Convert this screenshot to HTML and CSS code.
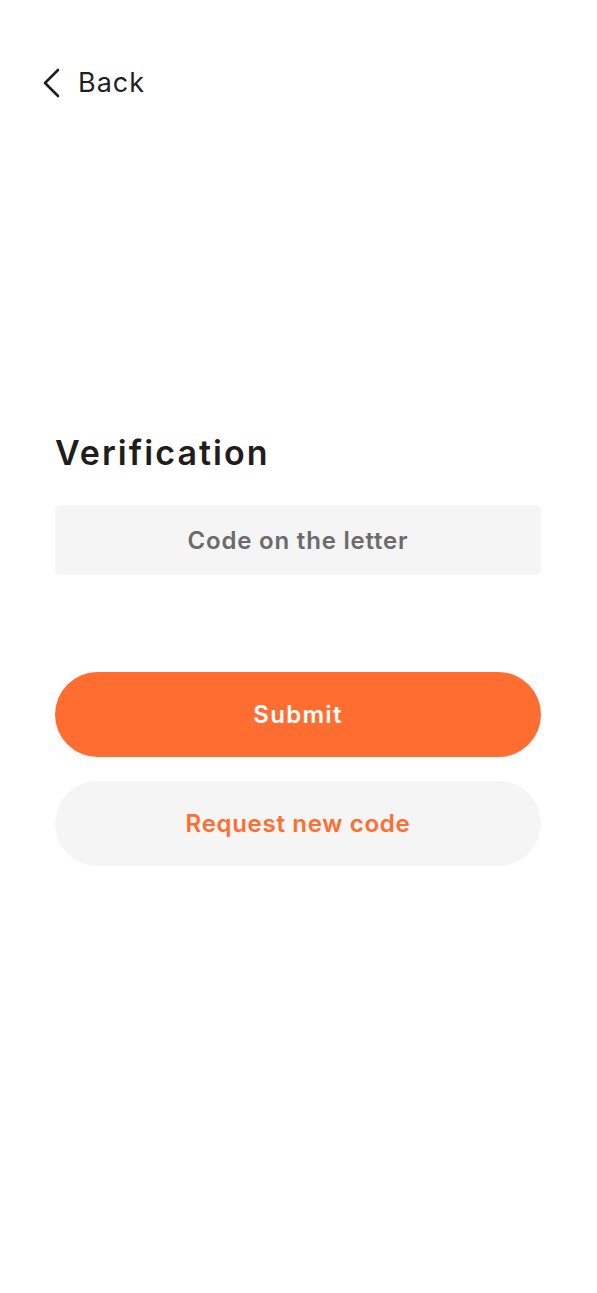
FILE: index.html
```html
<!DOCTYPE html>
<html lang="en">
<head>
<meta charset="utf-8">
<title>Verification</title>
<link rel="stylesheet" href="styles.css">
</head>
<body>
<div class="screen">
  <header class="topbar">
    <a class="back" href="#">
      <svg class="chev" width="20" height="30" viewBox="0 0 20 30" fill="none">
        <path d="M17 2 L4 15 L17 28" stroke="#1f1f1f" stroke-width="2.6" stroke-linecap="round" stroke-linejoin="round"/>
      </svg>
      <span class="back-label">Back</span>
    </a>
  </header>
  <main class="content">
    <h1 class="title">Verification</h1>
    <div class="field">Code on the letter</div>
    <div class="actions">
      <button class="btn btn-primary">Submit</button>
      <button class="btn btn-secondary">Request new code</button>
    </div>
  </main>
</div>
</body>
</html>
```
FILE: styles.css
```css
* { box-sizing: border-box; }
html, body { margin: 0; padding: 0; background: #fff; }
body {
  font-family: "Inter", "Noto Sans", sans-serif;
  color: #1f1d1d;
  width: 597px;
  height: 1293px;
}
.screen { display: flex; flex-direction: column; }
.topbar { padding: 68px 0 0 41px; }
.back {
  display: inline-flex;
  align-items: center;
  gap: 17px;
  text-decoration: none;
  color: #1f1f1f;
}
.chev { display: block; }
.back-label { font-size: 27px; font-weight: 400; line-height: 30px; letter-spacing: 1px; }
.content { padding: 331px 56px 0 55px; display: flex; flex-direction: column; }
.title {
  margin: 0;
  font-size: 34px;
  font-weight: 600;
  line-height: 40px;
  color: #1f1d1d;
  letter-spacing: 2.05px;
}
.field {
  margin-top: 32px;
  height: 70px;
  background: #f5f5f5;
  border-radius: 5px;
  display: flex;
  align-items: center;
  justify-content: center;
  font-size: 24px;
  font-weight: 600;
  color: #6b6b6b;
  letter-spacing: 0.8px;
}
.actions { margin-top: 97px; display: flex; flex-direction: column; gap: 24px; }
.btn {
  height: 85px;
  border: none;
  border-radius: 43px;
  font-family: inherit;
  font-size: 24px;
  font-weight: 600;
  letter-spacing: 0.9px;
  display: flex;
  align-items: center;
  justify-content: center;
  width: 100%;
}
.btn-primary { background: #ff6d30; color: #fff; letter-spacing: 1.3px; }
.btn-secondary { background: #f5f5f5; color: #ff6d30; letter-spacing: 0.7px; }
```
